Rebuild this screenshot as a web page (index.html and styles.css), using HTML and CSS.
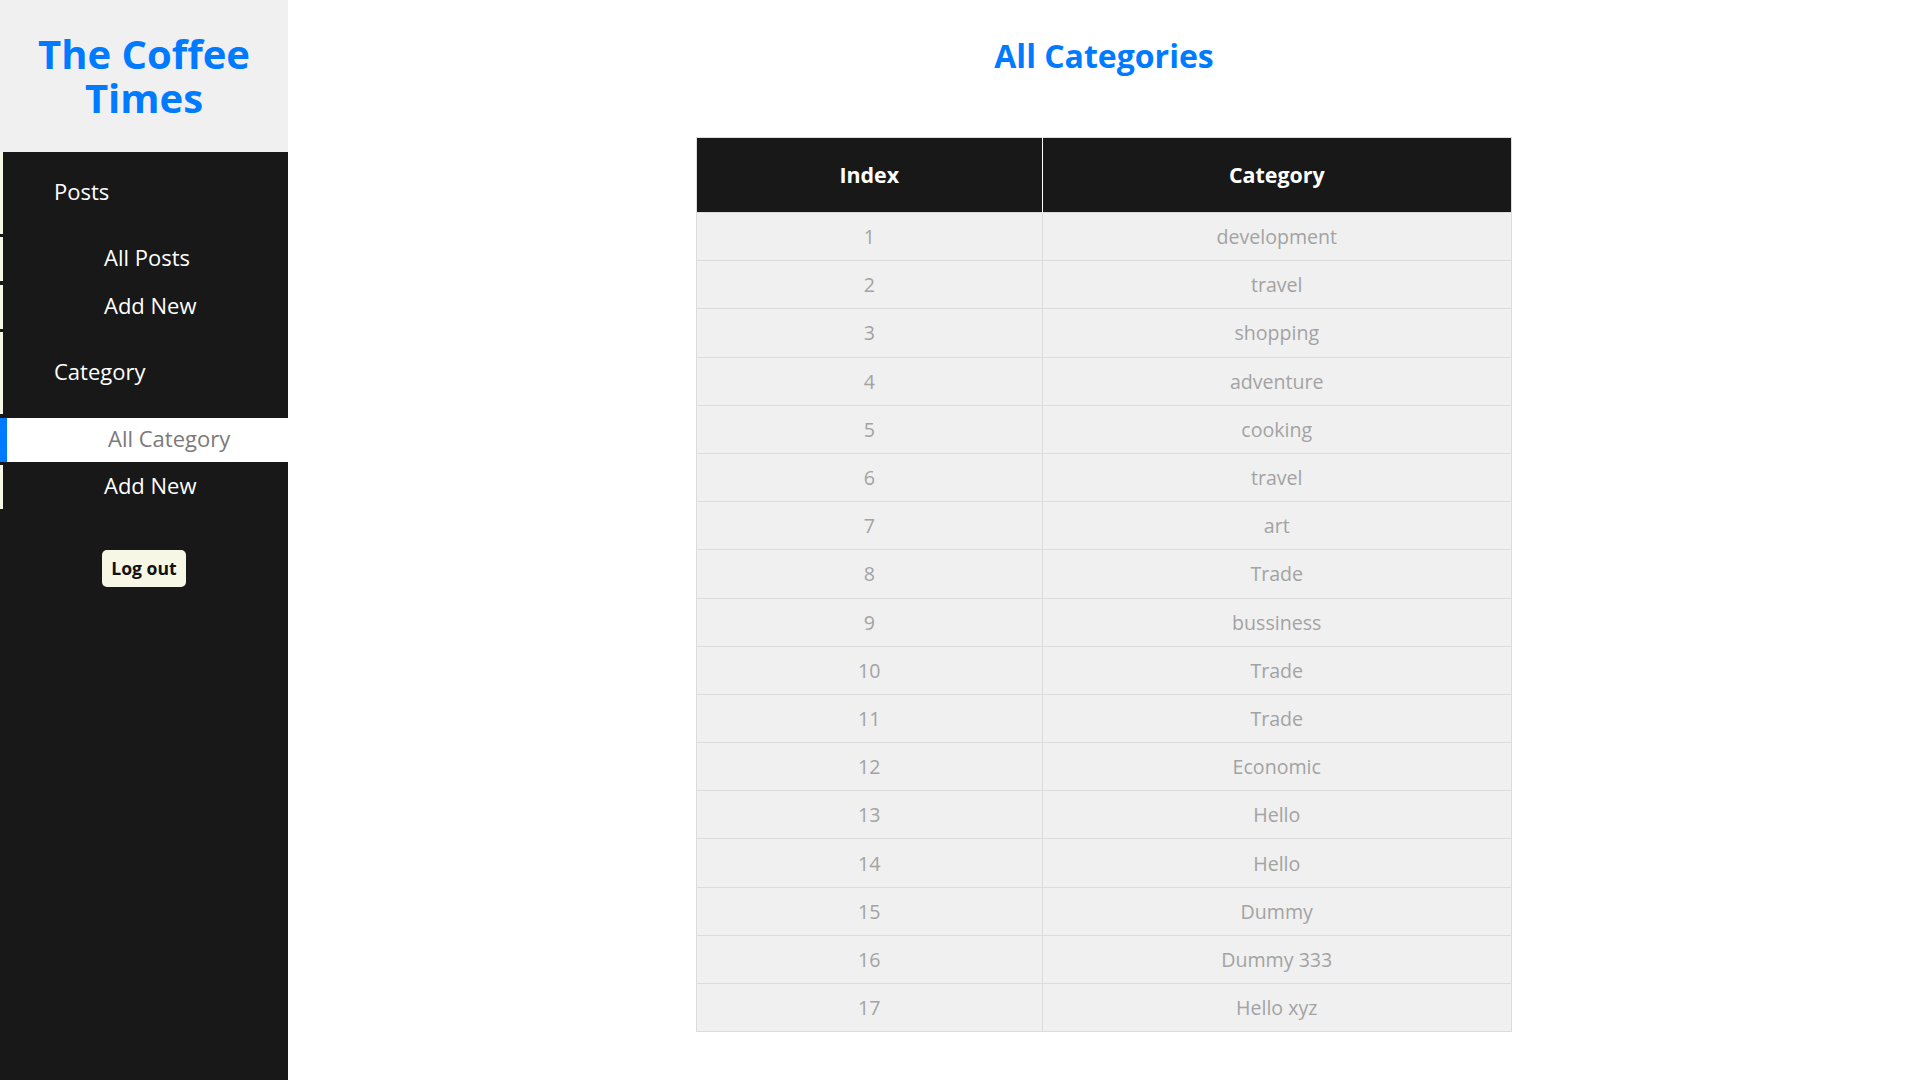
FILE: index.html
```html
<!DOCTYPE html>
<html lang="en">
<head>
<meta charset="utf-8">
<title>All Categories - The Coffee Times</title>
<link rel="stylesheet" href="styles.css">
</head>
<body>
<aside class="sidebar">
  <div class="brand"><span class="brand-name">The Coffee Times</span></div>
  <ul class="nav">
    <li class="nav-item nav-head">Posts</li>
    <li class="nav-item nav-sub">All Posts</li>
    <li class="nav-item nav-sub">Add New</li>
    <li class="nav-item nav-head">Category</li>
    <li class="nav-item nav-sub nav-active">All Category</li>
    <li class="nav-item nav-sub">Add New</li>
  </ul>
  <div class="logout-wrap"><button class="logout">Log out</button></div>
</aside>
<main class="main">
  <h1 class="page-title">All Categories</h1>
  <table class="cat-table">
    <thead>
      <tr><th class="col-index">Index</th><th class="col-cat">Category</th></tr>
    </thead>
    <tbody>
      <tr><td>1</td><td>development</td></tr>
      <tr><td>2</td><td>travel</td></tr>
      <tr><td>3</td><td>shopping</td></tr>
      <tr><td>4</td><td>adventure</td></tr>
      <tr><td>5</td><td>cooking</td></tr>
      <tr><td>6</td><td>travel</td></tr>
      <tr><td>7</td><td>art</td></tr>
      <tr><td>8</td><td>Trade</td></tr>
      <tr><td>9</td><td>bussiness</td></tr>
      <tr><td>10</td><td>Trade</td></tr>
      <tr><td>11</td><td>Trade</td></tr>
      <tr><td>12</td><td>Economic</td></tr>
      <tr><td>13</td><td>Hello</td></tr>
      <tr><td>14</td><td>Hello</td></tr>
      <tr><td>15</td><td>Dummy</td></tr>
      <tr><td>16</td><td>Dummy 333</td></tr>
      <tr><td>17</td><td>Hello xyz</td></tr>
    </tbody>
  </table>
</main>
</body>
</html>
```
FILE: styles.css
```css
* { box-sizing: border-box; }
html, body { margin: 0; padding: 0; }
body {
  display: flex;
  min-height: 100vh;
  font-family: "Open Sans", "Liberation Sans", sans-serif;
  background: #ffffff;
}
.sidebar {
  width: 288px;
  flex: 0 0 288px;
  min-height: 100vh;
  background: #181818;
}
.brand {
  height: 152px;
  background: #f0f0f0;
  display: flex;
  align-items: center;
  justify-content: center;
  text-align: center;
  padding: 0 20px;
}
.brand-name {
  color: #007bff;
  font-weight: 700;
  font-size: 40px;
  line-height: 44px;
}
.nav {
  list-style: none;
  margin: 0;
  padding: 0;
  display: flex;
  flex-direction: column;
  gap: 3.4px;
}
.nav-item {
  display: flex;
  align-items: center;
  border-left: 3px solid #f7f7e6;
  color: #ffffff;
  font-size: 22px;
  line-height: 26px;
  padding-bottom: 4px;
}
.nav-head { height: 82px; padding-left: 51px; }
.nav-sub { height: 44px; padding-left: 101px; }
.nav-active {
  border-left: 7px solid #007bff;
  background: #ffffff;
  color: #7a7a7a;
}
.logout-wrap {
  display: flex;
  justify-content: center;
  margin-top: 41px;
}
.logout {
  width: 84px;
  height: 37px;
  border: none;
  border-radius: 5px;
  background: #f7f7e6;
  color: #111;
  font-family: "Open Sans", "Liberation Sans", sans-serif;
  font-weight: 700;
  font-size: 17.6px;
  padding: 0;
}
.main {
  flex: 1;
  text-align: center;
}
.page-title {
  margin: 34px 0 59px;
  color: #007bff;
  font-size: 32px;
  line-height: 44px;
  font-weight: 700;
}
.cat-table {
  width: 816px;
  margin: 0 auto;
  border-collapse: collapse;
  border: 1px solid #dcdcdc;
}
.cat-table th {
  height: 75px;
  background: #181818;
  color: #ffffff;
  font-size: 21.4px;
  font-weight: 700;
  border-left: 1px solid #ffffff;
  padding: 0 0 2px;
}
.cat-table th:first-child { border-left: none; }
.col-index { width: 346px; }
.col-cat { width: 470px; }
.cat-table td {
  height: 48.2px;
  background: #f0f0f0;
  color: #a3a3a3;
  font-size: 19.6px;
  border: 1px solid #dcdcdc;
  padding: 0;
}
```
